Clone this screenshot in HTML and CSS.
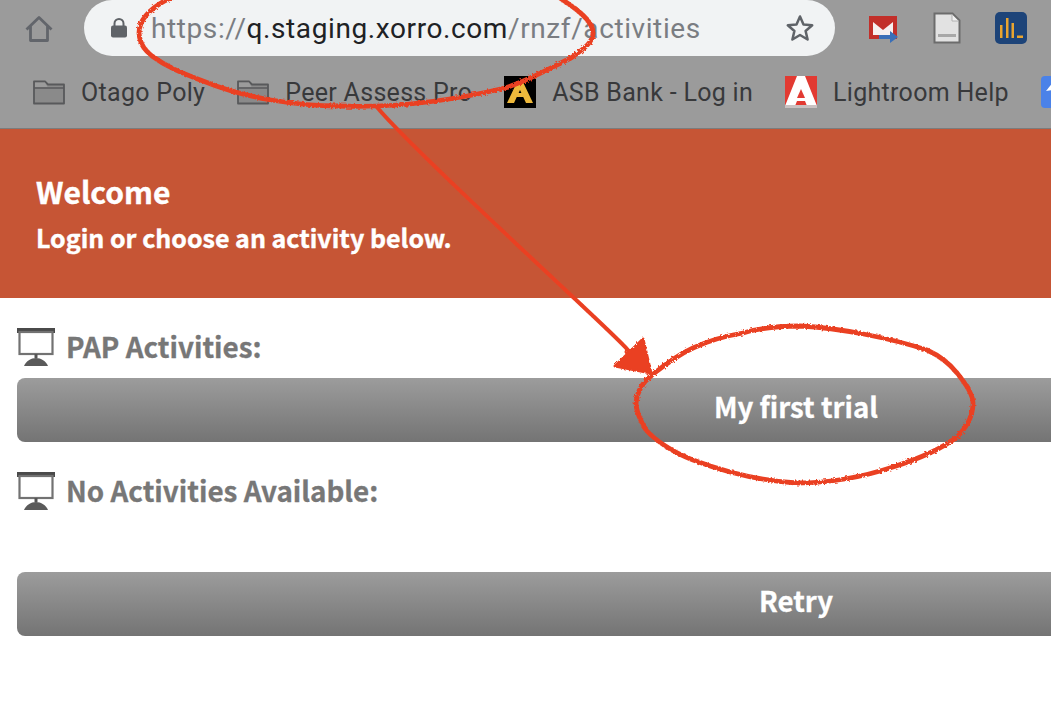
FILE: index.html
```html
<!DOCTYPE html>
<html lang="en">
<head>
<meta charset="utf-8">
<title>Activities</title>
<link rel="stylesheet" href="styles.css">
</head>
<body>
<div class="page">
  <div class="chrome">
    <div class="toolbar">
      <svg class="home" viewBox="0 0 28 28" width="28" height="28"><path d="M1.500 14.500 14 2.500l12.500 12M5.500 11v14.500h17V11" fill="none" stroke="#62656b" stroke-width="2.800" stroke-linejoin="round"/></svg>
      <div class="omnibox">
        <svg class="lock" viewBox="0 0 18 22" width="18" height="22"><path d="M4.500 9V6.500a4.500 4.500 0 0 1 9 0V9" fill="none" stroke="#5f6368" stroke-width="2"/><rect x="1" y="8.500" width="16" height="12" rx="2" fill="#5f6368"/></svg>
        <span class="url"><span class="dim">https://</span>q.staging.xorro.com<span class="dim">/rnzf/activities</span></span>
        <svg class="star" viewBox="0 0 30 30" width="30" height="30"><path d="M15 3.500l3.500 8 8.700.8-6.600 5.700 2 8.500L15 22l-7.600 4.500 2-8.500-6.600-5.700 8.700-.8z" fill="none" stroke="#5f6368" stroke-width="2.500" stroke-linejoin="round"/></svg>
      </div>
      <div class="extensions">
        <svg viewBox="0 0 30 30" width="30" height="30"><rect y="3" width="28" height="23" fill="#c22f2a"/><path d="M4 9l10 8 10-8v13H4z" fill="#f6f0f0"/><path d="M10 22h11v-4l8 6-8 6v-4H10z" fill="#3a6fb8"/></svg>
        <svg viewBox="0 0 28 32" width="28" height="32"><path d="M1.500 1.500h18l7 7v22h-25z" fill="#e2e2e2" stroke="#6c6c6c" stroke-width="2"/><path d="M19 2.500v6.500h6.500" fill="#f2f2f2" stroke="#b0b0b0"/><rect x="5" y="22" width="18" height="3" fill="#a8a8a8"/></svg>
        <svg viewBox="0 0 32 32" width="32" height="32"><rect width="32" height="32" rx="5" fill="#1d4479"/><path d="M5 26V13h2.500v13zM11 26V6h2.500v20zM16.500 26V11H19v15zM22 26v-2.500h6V26z" fill="#e9a42f"/></svg>
      </div>
    </div>
    <div class="bookmarks">
      <div class="bookmark"><svg class="folder" viewBox="0 0 32 26" width="32" height="26"><path d="M1 2.500h11l3 3h16v19H1z" fill="#8a8a8a" stroke="#58595b" stroke-width="1.800" stroke-linejoin="round"/><path d="M1 9h30" stroke="#58595b" stroke-width="1.500"/><path d="M2 3.500h10l2.500 4.500H2z" fill="#9b9b9b"/></svg><span>Otago Poly</span></div>
      <div class="bookmark"><svg class="folder" viewBox="0 0 32 26" width="32" height="26"><path d="M1 2.500h11l3 3h16v19H1z" fill="#8a8a8a" stroke="#58595b" stroke-width="1.800" stroke-linejoin="round"/><path d="M1 9h30" stroke="#58595b" stroke-width="1.500"/><path d="M2 3.500h10l2.500 4.500H2z" fill="#9b9b9b"/></svg><span>Peer Assess Pro</span></div>
      <div class="bookmark"><svg class="favicon" viewBox="0 0 32 32" width="32" height="32"><rect width="32" height="32"/><path d="M3 27 13 6h6l10 21h-7l-6-13-6 13z" fill="#eeb93c"/><rect x="9" y="17" width="14" height="4" fill="#eeb93c"/></svg><span>ASB Bank - Log in</span></div>
      <div class="bookmark"><svg class="favicon" viewBox="0 0 32 32" width="32" height="32"><rect width="32" height="30" fill="#e23a32"/><path d="M12 0h8l12 30H22l-2-5h-8l-2 5H0z" fill="#fff"/><path d="M16 13l4 9h-8z" fill="#e23a32"/><rect y="29" width="32" height="3" fill="#c9c2c2"/></svg><span>Lightroom Help</span></div>
      <div class="bookmark"><svg class="favicon" viewBox="0 0 32 32" width="32" height="32"><rect width="32" height="32" rx="4" fill="#4b82e8"/><path d="M5 15 13 5l6 8z" fill="#fff"/></svg></div>
    </div>
  </div>
  <header class="banner">
    <h1>Welcome</h1>
    <p>Login or choose an activity below.</p>
  </header>
  <main class="content">
    <section class="group">
      <h2 class="group-title"><svg viewBox="0 0 38 38" width="38" height="38"><rect width="38" height="5" fill="#4a4a4a"/><rect x="2.500" y="4" width="33" height="22" fill="none" stroke="#727272" stroke-width="2.200"/><path d="M19 26v4" stroke="#555" stroke-width="3"/><path d="M7 38c2-5 7-8 12-8s10 3 12 8z" fill="#5a5a5a"/></svg><span>PAP Activities:</span></h2>
      <button class="wide-btn"><span>My first trial</span></button>
    </section>
    <section class="group">
      <h2 class="group-title"><svg viewBox="0 0 38 38" width="38" height="38"><rect width="38" height="5" fill="#4a4a4a"/><rect x="2.500" y="4" width="33" height="22" fill="none" stroke="#727272" stroke-width="2.200"/><path d="M19 26v4" stroke="#555" stroke-width="3"/><path d="M7 38c2-5 7-8 12-8s10 3 12 8z" fill="#5a5a5a"/></svg><span>No Activities Available:</span></h2>
      <button class="wide-btn retry"><span>Retry</span></button>
    </section>
  </main>
  <svg class="annotation" viewBox="0 0 1051 718" width="1051" height="718">
    <defs><filter id="rough" x="-5%" y="-5%" width="110%" height="110%"><feTurbulence type="fractalNoise" baseFrequency="0.45" numOctaves="2" seed="4"/><feDisplacementMap in="SourceGraphic" scale="3.500"/></filter></defs>
    <g filter="url(#rough)" fill="none" stroke="#ea4123" stroke-width="4.800" stroke-linecap="round">
      <path d="M170 -2C150 8 139 20 139 33 140 46 147 52 152 56 168 68 185 74 203 81 225 90 248 96 271 100 295 104 318 106 339 106 395 108 455 100 505 88 530 80 550 68 571 58 585 48 593 42 593 33 593 20 575 8 560 -2"/>
      <path d="M376 106C400 135 480 210 574 298S610 336 632 358" stroke-width="4"/>
      <path d="M652 375C668 362 680 354 693 348 710 340 725 336 743 333 760 328 780 326 800 326 840 328 890 338 927 350 940 356 950 364 957 373 966 384 973 394 973 403 973 415 967 427 957 437 940 450 915 460 893 467 860 478 830 483 797 483 760 481 725 472 693 460 672 452 655 440 646 430 640 420 636 412 636 403 637 392 643 382 652 375z"/>
      <path d="M615 366 643 339 651 373z" fill="#ea4123" stroke-linejoin="round" stroke-width="3"/>
    </g>
  </svg>
</div>
</body>
</html>
```
FILE: styles.css
```css
* { box-sizing: border-box; }
html, body { margin: 0; height: 100%; }
body { background: #fff; overflow: hidden; }
.page { position: relative; width: 1051px; height: 718px; overflow: hidden; }

.chrome {
  height: 129px;
  background: #9b9b9b;
  border-bottom: 1px solid #7c7c7c;
  font-family: "Roboto", "Liberation Sans", sans-serif;
}
.toolbar { height: 56px; display: flex; align-items: center; padding-left: 25px; }
.home { flex: none; margin-top: 1px; }
.omnibox {
  flex: none;
  width: 751px;
  height: 56px;
  margin-left: 31px;
  background: #f1f3f4;
  border-radius: 28px;
  display: flex;
  align-items: center;
  padding: 0 20px 0 26px;
}
.lock { flex: none; }
.url { flex: 1; margin-left: 23px; font-size: 28px; color: #202124; white-space: nowrap; letter-spacing: .6px; }
.dim { color: #7a7d82; }
.star { flex: none; }
.extensions { display: flex; align-items: center; margin-left: 34px; gap: 34px; }
.bookmarks { height: 72px; display: flex; align-items: center; padding: 0 0 0 33px; gap: 32px; }
.bookmark { display: flex; align-items: center; gap: 16px; font-size: 25px; color: #38393b; white-space: nowrap; flex: none; letter-spacing: .3px; }

.banner {
  height: 169px;
  background: #c65535;
  color: #fff;
  padding: 42px 36px 0;
  font-family: "Noto Sans CJK SC", "Noto Sans CJK JP", sans-serif;
  font-weight: 700;
  -webkit-text-stroke: .4px #fff;
}
.banner h1 { margin: 0; font-size: 30px; line-height: 40px; }
.banner p { margin: 8px 0 0; font-size: 25px; line-height: 36px; }

.content { padding: 30px 0 0 17px; font-family: "Noto Sans CJK SC", "Noto Sans CJK JP", sans-serif; }
.group { margin-bottom: 30px; }
.group:last-child { margin-bottom: 0; }
.group-title {
  margin: 0;
  display: flex;
  align-items: flex-start;
  gap: 11px;
  height: 50px;
  font-size: 27.800px;
  line-height: 36px;
  font-weight: 700;
  color: #777;
  -webkit-text-stroke: .3px #777;
}
.group-title svg { flex: none; }
.wide-btn {
  display: block;
  width: 1558px;
  height: 64px;
  border: 0;
  border-radius: 8px;
  background: linear-gradient(#9c9c9c, #747474);
  color: #fff;
  font: 700 27.600px/34px "Noto Sans CJK SC", "Noto Sans CJK JP", sans-serif;
  -webkit-text-stroke: .3px #fff;
  padding: 0 0 8px;
}
.retry { margin-top: 50px; }

.annotation { position: absolute; left: 0; top: 0; pointer-events: none; }
```
